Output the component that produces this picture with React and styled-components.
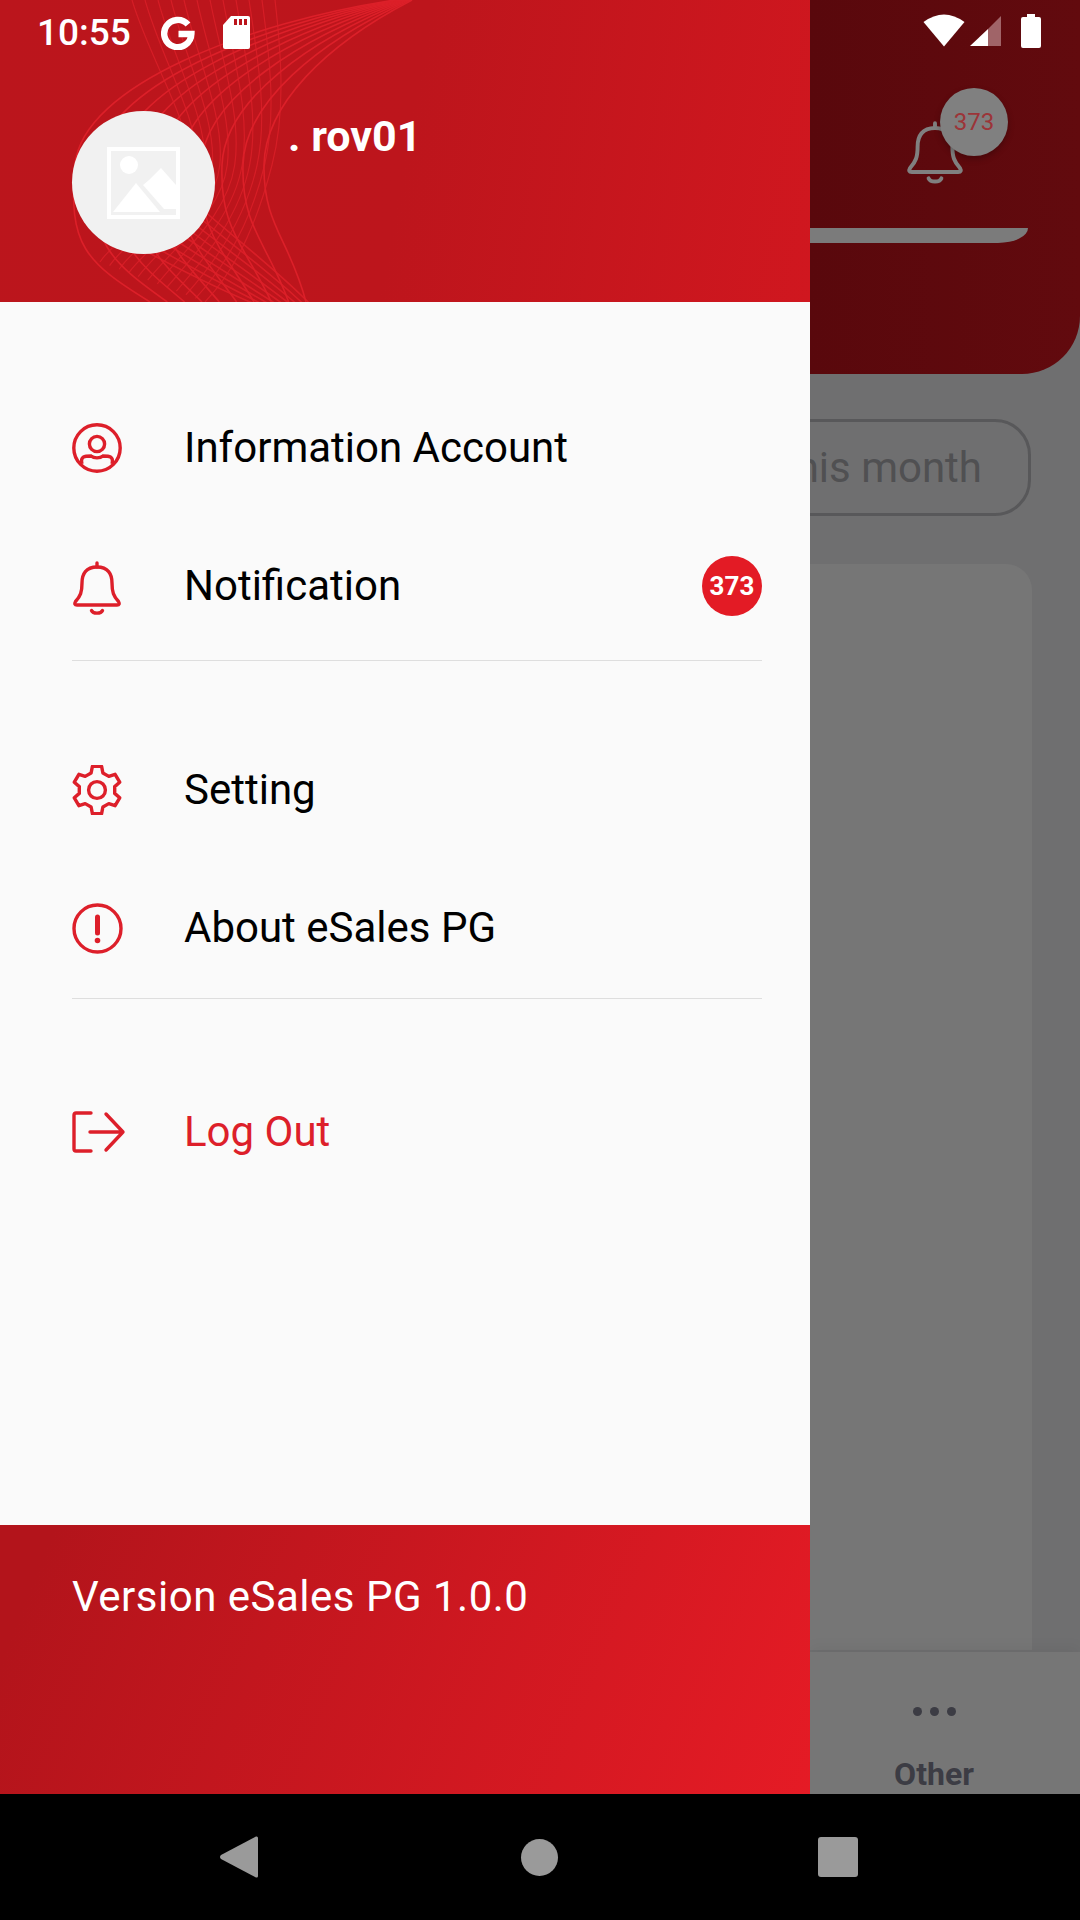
import styled, { createGlobalStyle } from "styled-components";

const GlobalStyle = createGlobalStyle`
  html, body {
    margin: 0;
    padding: 0;
    background: #000;
  }
  * {
    box-sizing: border-box;
  }
`;

const RED = "#dd1f2a";

const Screen = styled.div`
  position: relative;
  display: flex;
  flex-direction: column;
  width: 1080px;
  height: 1920px;
  overflow: hidden;
  font-family: Roboto, "Liberation Sans", sans-serif;
`;

const Main = styled.div`
  display: flex;
  flex: 1;
  min-height: 0;
`;

/* status bar floats over both drawer and the dimmed page */
const StatusBar = styled.div`
  position: absolute;
  top: 0;
  left: 0;
  right: 0;
  z-index: 3;
  display: flex;
  justify-content: space-between;
  height: 60px;
  padding: 14px 39px 0 37px;
  color: #fff;
`;

const StatusGroup = styled.div`
  display: flex;
  align-items: flex-start;
`;

const Clock = styled.span`
  width: 93px;
  margin: -2px 31px 0 0;
  font-size: 37px;
  font-weight: 500;
  line-height: 41px;
  white-space: nowrap;
`;

const Drawer = styled.aside`
  display: flex;
  flex-direction: column;
  flex: 0 0 810px;
  background: #fafafa;
`;

const DrawerHead = styled.header`
  position: relative;
  display: flex;
  align-items: flex-start;
  flex: 0 0 302px;
  padding: 111px 0 0 72px;
  overflow: hidden;
  background: linear-gradient(100deg, #bb151c 0%, #bd151c 50%, #d0171f 100%);
`;

const WaveArt = styled.svg`
  position: absolute;
  top: 0;
  left: 0;
`;

const Avatar = styled.div`
  position: relative;
  display: flex;
  align-items: center;
  justify-content: center;
  width: 143px;
  height: 143px;
  border-radius: 50%;
  background: #f1f1f1;
`;

const UserName = styled.div`
  position: relative;
  margin: 0 0 0 73px;
  color: #fff;
  font-size: 43px;
  font-weight: 700;
  line-height: 50px;
`;

const DrawerBody = styled.nav`
  display: flex;
  flex-direction: column;
  flex: 1;
  padding: 77px 48px 0 72px;
`;

const Section = styled.div`
  padding-bottom: ${(p) => p.$pad || 0}px;
  margin-bottom: ${(p) => p.$gap || 0}px;
  border-bottom: ${(p) => (p.$pad ? "1px solid #dedede" : "none")};
`;

const Row = styled.div`
  display: flex;
  align-items: center;
  height: 138px;
`;

const RowIcon = styled.span`
  display: flex;
  align-items: center;
  flex: 0 0 113px;
  margin-right: -1px;
`;

const RowLabel = styled.span`
  flex: 1;
  color: ${(p) => (p.$danger ? RED : "#000")};
  font-size: 42px;
  line-height: 50px;
`;

const CountBadge = styled.span`
  display: flex;
  align-items: center;
  justify-content: center;
  width: 60px;
  height: 60px;
  border-radius: 50%;
  background: #e31b25;
  color: #fff;
  font-size: 26px;
  font-weight: 700;
`;

const DrawerFoot = styled.footer`
  flex: 0 0 269px;
  padding: 47px 0 0 72px;
  background: linear-gradient(112deg, #b3141b 6%, #e51b25 100%);
  color: #fff;
  font-size: 42px;
  letter-spacing: 0.5px;
  line-height: 50px;
`;

const Backdrop = styled.div`
  display: flex;
  flex-direction: column;
  flex: 1;
  min-width: 0;
  overflow: hidden;
  background: #6f6f70;
`;

const PageHead = styled.div`
  flex: 0 0 374px;
  padding-top: 88px;
  border-bottom-right-radius: 58px;
  background: linear-gradient(90deg, #59080c, #620a0e);
`;

const BellRow = styled.div`
  display: flex;
  justify-content: flex-end;
  padding-right: 72px;
`;

const BellWrap = styled.div`
  position: relative;
  display: flex;
  align-items: flex-end;
  width: 102px;
  height: 96px;
`;

const PageBadge = styled.span`
  position: absolute;
  top: 0;
  right: 0;
  display: flex;
  align-items: center;
  justify-content: center;
  width: 68px;
  height: 68px;
  border-radius: 50%;
  background: #808080;
  box-shadow: 0 3px 6px rgba(0, 0, 0, 0.25);
  color: #9c3438;
  font-size: 24px;
`;

const SearchEdge = styled.div`
  width: 218px;
  height: 15px;
  margin-top: 44px;
  border-bottom-right-radius: 30px 15px;
  background: #7b7b7b;
`;

const PeriodRow = styled.div`
  display: flex;
  justify-content: flex-end;
  flex: 0 0 auto;
  margin: 45px 49px 0 0;
`;

const PeriodPill = styled.div`
  flex: 0 0 auto;
  height: 97px;
  padding: 0 46px 0 60px;
  border: 3px solid #58585a;
  border-radius: 36px;
  color: #505052;
  font-size: 42px;
  line-height: 91px;
  white-space: nowrap;
`;

const PageCard = styled.div`
  flex: 1;
  margin: 48px 48px 2px 0;
  border-top-right-radius: 26px;
  background: #767676;
`;

const TabBar = styled.div`
  display: flex;
  flex: 0 0 142px;
  background: #767676;
  box-shadow: 0 -6px 12px rgba(0, 0, 0, 0.04);
`;

const TabItem = styled.div`
  display: flex;
  flex-direction: column;
  align-items: center;
  width: 248px;
  padding-top: 55px;
  color: #3c3c44;
`;

const Dots = styled.div`
  display: flex;
  gap: 8px;
  margin-bottom: 39px;

  span {
    width: 9px;
    height: 9px;
    border-radius: 50%;
    background: #3c3c44;
  }
`;

const TabLabel = styled.span`
  font-size: 32px;
  font-weight: 700;
  line-height: 38px;
`;

const NavBar = styled.div`
  display: flex;
  align-items: center;
  flex: 0 0 126px;
  padding-left: 220px;
  background: #000;
`;

const HomeButton = styled.span`
  width: 37px;
  height: 37px;
  margin-left: 263px;
  border-radius: 50%;
  background: #9a9a9a;
`;

const RecentButton = styled.span`
  width: 40px;
  height: 40px;
  margin-left: 260px;
  border-radius: 3px;
  background: #9a9a9a;
`;

const lerp = (a, b, t) => a.map((v, i) => v + (b[i] - v) * t);

// a ribbon of curves, each one a blend of the two outer curves
function ribbon(from, to, count) {
  const out = [];
  for (let i = 0; i < count; i++) {
    const p = lerp(from, to, i / (count - 1));
    out.push(
      `M${p[0]} ${p[1]}C${p[2]} ${p[3]} ${p[4]} ${p[5]} ${p[6]} ${p[7]}S${p[8]} ${p[9]} ${p[10]} ${p[11]}`
    );
  }
  return out;
}

const fanA = ribbon(
  [412, 0, 325, 45, 265, 105, 264, 165, 290, 240, 306, 302],
  [395, 0, 250, 22, 82, 85, 75, 165, 85, 262, 150, 302],
  10
);
const fanB = ribbon(
  [275, 0, 282, 60, 285, 115, 272, 165, 240, 265, 205, 302],
  [132, 0, 150, 60, 190, 120, 190, 165, 125, 225, 100, 262],
  12
);
const fanC = ribbon(
  [125, 240, 165, 262, 210, 285, 250, 302, 260, 306, 265, 308],
  [170, 180, 205, 215, 260, 255, 302, 296, 310, 302, 315, 306],
  9
);

function Wave() {
  return (
    <WaveArt width="810" height="302" viewBox="0 0 810 302" fill="none">
      <g stroke="#dc2029" strokeWidth="1.6">
        {fanA.map((d) => (
          <path key={d} d={d} />
        ))}
      </g>
      <g stroke="#dc2029" strokeWidth="1.2" opacity="0.8">
        {fanB.map((d) => (
          <path key={d} d={d} />
        ))}
      </g>
      <g stroke="#dc2029" strokeWidth="1.6" opacity="0.9">
        {fanC.map((d) => (
          <path key={d} d={d} />
        ))}
      </g>
    </WaveArt>
  );
}

function GoogleMark() {
  return (
    <svg width="34" height="34" viewBox="0 0 34 34" fill="none" style={{ marginTop: 2 }}>
      <path d="M27 8.5A13.6 13.6 0 1 0 30.4 18H17.5" stroke="#fff" strokeWidth="6.4" />
    </svg>
  );
}

function SdCard() {
  return (
    <svg width="27" height="33" viewBox="0 0 27 33" style={{ marginLeft: 28, marginTop: 2 }}>
      <path d="M8 0H25Q27 0 27 2V31Q27 33 25 33H2Q0 33 0 31V9Z" fill="#fff" />
      <path d="M11 3h3v6h-3zM16 3h3v6h-3zM21 3h3v6h-3z" fill="#bb151c" />
    </svg>
  );
}

function Wifi() {
  return (
    <svg width="42" height="33" viewBox="0 0 42 33">
      <path d="M21 32.5L0.5 8Q21 -7 41.5 8Z" fill="#fff" />
    </svg>
  );
}

function Signal() {
  return (
    <svg width="32" height="33" viewBox="0 0 32 33" style={{ marginLeft: 5 }}>
      <path d="M18 15V32H0Z" fill="#fff" />
      <path d="M18 15L31 2V32H18Z" fill="#a06468" />
    </svg>
  );
}

function Battery() {
  return (
    <svg width="20" height="34" viewBox="0 0 20 34" style={{ marginLeft: 19 }}>
      <path d="M6 0H14V3H18Q20 3 20 5V32Q20 34 18 34H2Q0 34 0 32V5Q0 3 2 3H6Z" fill="#fff" />
    </svg>
  );
}

function ImagePlaceholder() {
  return (
    <svg width="73" height="72" viewBox="0 0 73 72">
      <rect x="2" y="2" width="69" height="68" fill="none" stroke="#fff" strokeWidth="4" />
      <circle cx="22" cy="18" r="9" fill="#fff" />
      <path d="M6 65L29 36L53 65Z" fill="#fff" />
      <path d="M42 33L54 21L69 38V62H57L36 38Z" fill="#fff" />
    </svg>
  );
}

function UserIcon() {
  return (
    <svg width="50" height="50" viewBox="0 0 50 50" fill="none" stroke={RED} strokeWidth="3.4">
      <circle cx="25" cy="25" r="23.2" />
      <circle cx="25" cy="21" r="7.6" />
      <path d="M10 41C8 33 13 33 19 33C22 35.5 28 35.5 31 33C37 33 42 33 40 41" />
    </svg>
  );
}

function BellIcon({ size = 50, color = RED, nudge = 0 }) {
  return (
    <svg
      width={size}
      height={size * 1.08}
      viewBox="0 0 50 54"
      fill="none"
      stroke={color}
      strokeWidth="3.4"
      strokeLinecap="round"
      strokeLinejoin="round"
      style={{ marginTop: nudge }}
    >
      <path d="M25 6C14 6 10 13 10 22C10 31 8.5 35 3.5 40.5Q1.5 44 5 44H45Q48.5 44 46.5 40.5C41.5 35 40 31 40 22C40 13 36 6 25 6Z" />
      <path d="M25 2V6" />
      <path d="M19.5 49.5C21 53 29 53 30.5 49.5" />
    </svg>
  );
}

function gearPath() {
  const pts = [];
  for (let i = 0; i < 6; i++) {
    const a = i * 60 - 90;
    [
      [18, a - 19],
      [24, a - 11],
      [24, a + 11],
      [18, a + 19],
    ].forEach(([r, deg]) => {
      const rad = (deg * Math.PI) / 180;
      pts.push(`${(25 + r * Math.cos(rad)).toFixed(1)} ${(25 + r * Math.sin(rad)).toFixed(1)}`);
    });
  }
  return `M${pts.join("L")}Z`;
}

function GearIcon() {
  return (
    <svg width="50" height="50" viewBox="0 0 50 50" fill="none" stroke={RED} strokeWidth="3.4" strokeLinejoin="round">
      <path d={gearPath()} />
      <circle cx="25" cy="25" r="8.4" />
    </svg>
  );
}

function AlertIcon() {
  return (
    <svg width="51" height="51" viewBox="0 0 51 51" fill="none" stroke={RED} strokeWidth="3.4" strokeLinecap="round">
      <circle cx="25.5" cy="25.5" r="23.5" />
      <path d="M25.5 14V30" strokeWidth="5" />
      <circle cx="25.5" cy="37.500" r="2" fill={RED} strokeWidth="1.6" />
    </svg>
  );
}

function LogoutIcon() {
  return (
    <svg width="54" height="42" viewBox="0 0 54 42" fill="none" stroke={RED} strokeWidth="3.4" strokeLinejoin="round" strokeLinecap="round">
      <path d="M19 2H4Q2 2 2 4V38Q2 40 4 40H19" />
      <path d="M18 21H51M34 3L51 21L34 39" />
    </svg>
  );
}

function BackTriangle() {
  return (
    <svg width="38" height="42" viewBox="0 0 38 42">
      <path d="M36 0.5Q38 0 38 2V40Q38 42 36 41.500L1 23Q-1 21 1 19Z" fill="#9a9a9a" />
    </svg>
  );
}

export default function App() {
  return (
    <Screen>
      <GlobalStyle />
      <StatusBar>
        <StatusGroup>
          <Clock>10:55</Clock>
          <GoogleMark />
          <SdCard />
        </StatusGroup>
        <StatusGroup>
          <Wifi />
          <Signal />
          <Battery />
        </StatusGroup>
      </StatusBar>

      <Main>
        <Drawer>
          <DrawerHead>
            <Wave />
            <Avatar>
              <ImagePlaceholder />
            </Avatar>
            <UserName>. rov01</UserName>
          </DrawerHead>

          <DrawerBody>
            <Section $pad={5} $gap={60}>
              <Row>
                <RowIcon>
                  <UserIcon />
                </RowIcon>
                <RowLabel>Information Account</RowLabel>
              </Row>
              <Row>
                <RowIcon>
                  <BellIcon nudge={3} />
                </RowIcon>
                <RowLabel>Notification</RowLabel>
                <CountBadge>373</CountBadge>
              </Row>
            </Section>
            <Section $pad={1} $gap={64}>
              <Row>
                <RowIcon>
                  <GearIcon />
                </RowIcon>
                <RowLabel>Setting</RowLabel>
              </Row>
              <Row>
                <RowIcon>
                  <AlertIcon />
                </RowIcon>
                <RowLabel>About eSales PG</RowLabel>
              </Row>
            </Section>
            <Section>
              <Row>
                <RowIcon>
                  <LogoutIcon />
                </RowIcon>
                <RowLabel $danger>Log Out</RowLabel>
              </Row>
            </Section>
          </DrawerBody>

          <DrawerFoot>Version eSales PG 1.0.0</DrawerFoot>
        </Drawer>

        <Backdrop>
          <PageHead>
            <BellRow>
              <BellWrap>
                <BellIcon size={58} color="#808080" />
                <PageBadge>373</PageBadge>
              </BellWrap>
            </BellRow>
            <SearchEdge />
          </PageHead>
          <PeriodRow>
            <PeriodPill>This month</PeriodPill>
          </PeriodRow>
          <PageCard />
          <TabBar>
            <TabItem>
              <Dots>
                <span />
                <span />
                <span />
              </Dots>
              <TabLabel>Other</TabLabel>
            </TabItem>
          </TabBar>
        </Backdrop>
      </Main>

      <NavBar>
        <BackTriangle />
        <HomeButton />
        <RecentButton />
      </NavBar>
    </Screen>
  );
}
